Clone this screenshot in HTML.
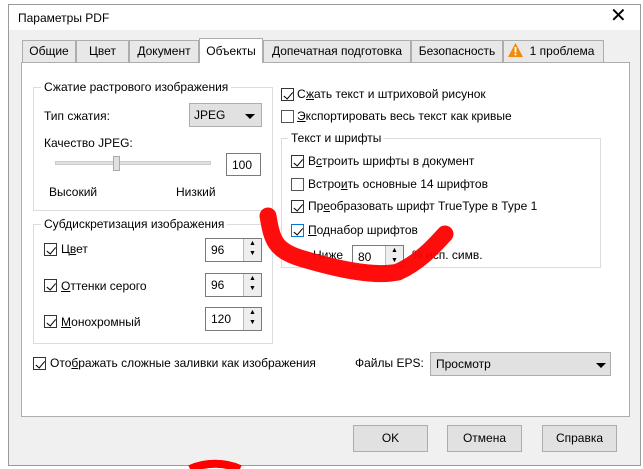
<!DOCTYPE html>
<html><head><meta charset="utf-8"><style>
*{box-sizing:border-box;margin:0;padding:0}
body{width:643px;height:469px;background:#fff;position:relative;overflow:hidden;font-family:"Liberation Sans","Noto Sans CJK SC",sans-serif;font-size:12px;color:#000}
.a{position:absolute}
.dlg{left:8px;top:4px;width:633px;height:462px;border:1px solid #9a9a9a;background:#f0f0f0}
.title{left:9px;top:5px;width:631px;height:25px;background:#fff}
.tab{position:absolute;top:40px;height:22px;border:1px solid #adadad;border-bottom:none;background:#e8e8e8;text-align:center;line-height:20px;font-size:12px}
.panel{left:21px;top:62px;width:609px;height:355px;background:#fff;border:1px solid #adadad}
.grp{position:absolute;border:1px solid #dcdcdc}
.gt{position:absolute;background:#fff;padding:0 3px;line-height:14px}
.cb{position:absolute;width:13px;height:13px;border:1px solid #333;background:#fff}
.cb.c::after{content:"";position:absolute;left:3.5px;top:0.5px;width:3.5px;height:7.5px;border:solid #000;border-width:0 1.6px 1.6px 0;transform:rotate(40deg)}
.t{position:absolute;line-height:14px;white-space:nowrap}
.spin{position:absolute;width:57px;height:24px;border:1px solid #7a7a7a;background:#fff}
.spin span{position:absolute;left:5px;top:4px}
.spin i{position:absolute;right:0;top:0;width:18px;height:22px;border-left:1px solid #bbb;background:#eee;font-style:normal;font-size:7px;text-align:center;line-height:10px}
.btn{position:absolute;top:425px;width:75px;height:27px;border:1px solid #adadad;background:#e1e1e1;text-align:center;line-height:25px}
.combo{position:absolute;border:1px solid #adadad;background:#e1e1e1}
.arr{position:absolute;width:0;height:0;border-left:5px solid transparent;border-right:5px solid transparent;border-top:5px solid #000}
u{text-decoration:underline}
</style></head><body>
<div class="a dlg"></div>
<div class="a title"></div>
<div class="t" style="left:18px;top:11px">Параметры PDF</div>
<div class="t" style="left:610px;top:6px;font-size:20px;line-height:20px">✕</div>
<div class="a panel"></div>
<div class="tab" style="left:22px;width:54px">Общие</div>
<div class="tab" style="left:76px;width:53px">Цвет</div>
<div class="tab" style="left:129px;width:70px">Документ</div>
<div class="tab" style="left:199px;width:64px;top:38px;height:25px;background:#fff;line-height:24px">Объекты</div>
<div class="tab" style="left:263px;width:148px">Допечатная подготовка</div>
<div class="tab" style="left:411px;width:92px">Безопасность</div>
<div class="tab" style="left:503px;width:101px;text-align:left;padding-left:4px"><svg width="15" height="14" style="vertical-align:-2px"><path d="M7.5 0 L15 14 L0 14Z" fill="#f28a0c"/><rect x="6.6" y="4" width="1.8" height="5.5" fill="#fff"/><rect x="6.6" y="10.5" width="1.8" height="1.8" fill="#fff"/></svg>&nbsp;&nbsp;1 проблема</div>

<div class="grp" style="left:33px;top:87px;width:240px;height:124px"></div>
<div class="gt" style="left:41px;top:80px">Сжатие растрового изображения</div>
<div class="t" style="left:44px;top:109px">Тип сжатия:</div>
<div class="combo" style="left:189px;top:103px;width:73px;height:24px"><span class="t" style="left:4px;top:4px">JPEG</span><div class="arr" style="left:55px;top:10px"></div></div>
<div class="t" style="left:44px;top:136px">Качество JPEG:</div>
<div class="a" style="left:55px;top:161px;width:156px;height:4px;background:#e0e0e0;border:1px solid #ccc"></div>
<div class="a" style="left:113px;top:156px;width:7px;height:15px;background:#e0e0e0;border:1px solid #aaa"></div>
<div class="a" style="left:226px;top:153px;width:35px;height:23px;border:1px solid #7a7a7a;background:#fff"><span class="t" style="left:5px;top:4px">100</span></div>
<div class="t" style="left:49px;top:185px">Высокий</div>
<div class="t" style="left:176px;top:185px">Низкий</div>

<div class="grp" style="left:33px;top:224px;width:240px;height:120px"></div>
<div class="gt" style="left:41px;top:217px">Субдискретизация изображения</div>
<div class="cb c" style="left:44px;top:243px"></div><div class="t" style="left:61px;top:242px">Ц<u>в</u>ет</div>
<div class="spin" style="left:205px;top:238px"><span>96</span><i>▲<br>▼</i></div>
<div class="cb c" style="left:44px;top:279px"></div><div class="t" style="left:61px;top:279px"><u>О</u>ттенки серого</div>
<div class="spin" style="left:205px;top:273px"><span>96</span><i>▲<br>▼</i></div>
<div class="cb c" style="left:44px;top:315px"></div><div class="t" style="left:61px;top:315px"><u>М</u>онохромный</div>
<div class="spin" style="left:205px;top:307px"><span>120</span><i>▲<br>▼</i></div>
<div class="cb c" style="left:33px;top:357px"></div><div class="t" style="left:50px;top:356px">Ото<u>б</u>ражать сложные заливки как изображения</div>

<div class="cb c" style="left:281px;top:88px"></div><div class="t" style="left:297px;top:87px">С<u>ж</u>ать текст и штриховой рисунок</div>
<div class="cb" style="left:281px;top:110px;border-color:#555"></div><div class="t" style="left:297px;top:109px"><u>Э</u>кспортировать весь текст как кривые</div>
<div class="grp" style="left:281px;top:138px;width:320px;height:130px"></div>
<div class="gt" style="left:288px;top:131px">Текст и шрифты</div>
<div class="cb c" style="left:291px;top:155px"></div><div class="t" style="left:308px;top:154px">В<u>с</u>троить шрифты в документ</div>
<div class="cb" style="left:291px;top:178px;border-color:#555"></div><div class="t" style="left:308px;top:177px">Встро<u>и</u>ть основные 14 шрифтов</div>
<div class="cb c" style="left:291px;top:200px"></div><div class="t" style="left:308px;top:199px">Пр<u>е</u>образовать шрифт TrueType в Type 1</div>
<div class="cb c" style="left:291px;top:224px;border-color:#0078d7"></div><div class="t" style="left:308px;top:223px"><u>П</u>однабор шрифтов</div>
<div class="t" style="left:313px;top:248px">Ниже</div>
<div class="spin" style="left:352px;top:245px;width:52px;height:22px"><span style="top:4px">80</span><i style="height:20px">▲<br>▼</i></div>
<div class="t" style="left:412px;top:248px">% исп. симв.</div>

<div class="t" style="left:355px;top:356px">Файлы EPS:</div>
<div class="combo" style="left:430px;top:352px;width:181px;height:24px"><span class="t" style="left:5px;top:4px">Просмотр</span><div class="arr" style="left:165px;top:10px"></div></div>

<svg class="a" style="left:0;top:0" width="643" height="469"><path d="M268 216 C272 240 275 250 300 258 C340 270 375 277 398 272 C420 262 435 245 445 234" fill="none" stroke="#ff0000" stroke-width="17" stroke-linecap="round" opacity="0.95"/><path d="M190 469 C205 462 225 462 240 469" fill="none" stroke="#ff0000" stroke-width="8"/></svg>

<div class="btn" style="left:353px">OK</div>
<div class="btn" style="left:447px">Отмена</div>
<div class="btn" style="left:542px">Справка</div>
</body></html>
